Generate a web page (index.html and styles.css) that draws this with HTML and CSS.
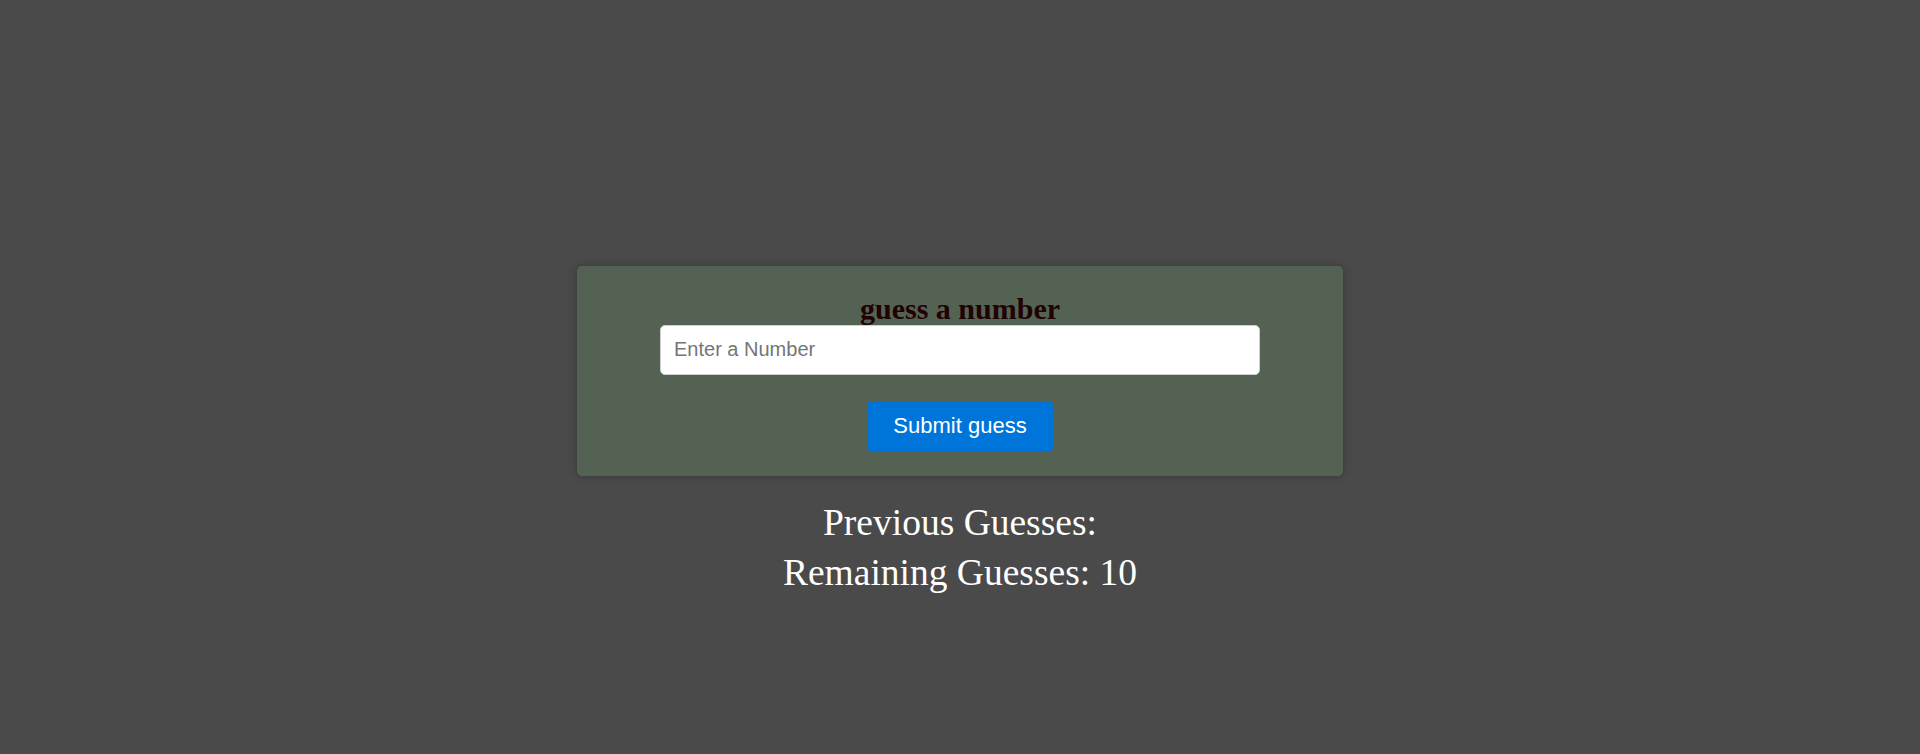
FILE: index.html
```html
<!DOCTYPE html>
<html lang="en">
<head>
<meta charset="utf-8">
<title>Guess a number</title>
<link rel="stylesheet" href="styles.css">
</head>
<body>
<main class="page">
  <section class="card">
    <h2 class="title">guess a number</h2>
    <input class="guess-input" type="text" placeholder="Enter a Number">
    <button class="submit-btn" type="button">Submit guess</button>
  </section>
  <div class="results">
    <p class="result-line">Previous Guesses:</p>
    <p class="result-line">Remaining Guesses: 10</p>
  </div>
</main>
</body>
</html>
```
FILE: styles.css
```css
html, body {
  margin: 0;
  padding: 0;
}
body {
  background: #4a4a4a;
  font-family: "Liberation Serif", "Times New Roman", serif;
  min-height: 754px;
}
.page {
  display: flex;
  flex-direction: column;
  align-items: center;
  padding-top: 266px;
}
.card {
  box-sizing: border-box;
  width: 766px;
  height: 210px;
  background: #536253;
  border-radius: 5px;
  box-shadow: 0 0 8px rgba(0, 0, 0, 0.25);
  padding: 28px 0 24px;
  display: flex;
  flex-direction: column;
  align-items: center;
}
.title {
  margin: 0;
  font-family: "Liberation Serif", "Times New Roman", serif;
  font-size: 30px;
  font-weight: bold;
  line-height: 30.5px;
  color: #200202;
}
.guess-input {
  box-sizing: border-box;
  width: 600px;
  height: 50px;
  margin: 0;
  padding: 0 13px;
  border: 1px solid #cfcfcf;
  border-radius: 5px;
  background: #ffffff;
  font-family: "Liberation Sans", Arial, sans-serif;
  font-size: 20px;
  color: #333;
  outline: none;
}
.guess-input::placeholder {
  color: #757575;
}
.submit-btn {
  box-sizing: border-box;
  margin-top: 26px;
  width: 186px;
  height: 51px;
  border: none;
  border-radius: 5px;
  background: #0075d9;
  color: #ffffff;
  font-family: "Liberation Sans", Arial, sans-serif;
  font-size: 22px;
  padding: 0;
  cursor: pointer;
}
.results {
  margin-top: 22px;
  text-align: center;
}
.result-line {
  margin: 0;
  color: #ffffff;
  font-family: "Liberation Serif", "Times New Roman", serif;
  font-size: 37.5px;
  line-height: 50px;
}
```
